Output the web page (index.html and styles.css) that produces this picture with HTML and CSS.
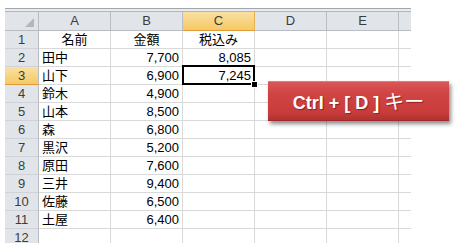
FILE: index.html
```html
<!DOCTYPE html>
<html lang="ja">
<head>
  <meta charset="UTF-8">
  <meta name="viewport" content="width=device-width, initial-scale=1.0">
  <title>Ctrl + D</title>
  <link rel="stylesheet" href="styles.css">
</head>
<body>
  <div class="page">
    <div class="sheet">
      <div class="sheet-top"></div>
      <div class="grid">
        <div class="hd corner"></div>
        <div class="hd col">A</div>
        <div class="hd col">B</div>
        <div class="hd col sel">C</div>
        <div class="hd col">D</div>
        <div class="hd col">E</div>
        <div class="hd col last"></div>

        <div class="rh">1</div>
        <div class="c ctr">名前</div>
        <div class="c ctr">金額</div>
        <div class="c ctr">税込み</div>
        <div class="c"></div><div class="c"></div><div class="c last"></div>

        <div class="rh">2</div>
        <div class="c">田中</div>
        <div class="c num">7,700</div>
        <div class="c num">8,085</div>
        <div class="c"></div><div class="c"></div><div class="c last"></div>

        <div class="rh sel">3</div>
        <div class="c">山下</div>
        <div class="c num">6,900</div>
        <div class="c num active">7,245</div>
        <div class="c"></div><div class="c"></div><div class="c last"></div>

        <div class="rh">4</div>
        <div class="c">鈴木</div>
        <div class="c num">4,900</div>
        <div class="c"></div><div class="c"></div><div class="c"></div><div class="c last"></div>

        <div class="rh">5</div>
        <div class="c">山本</div>
        <div class="c num">8,500</div>
        <div class="c"></div><div class="c"></div><div class="c"></div><div class="c last"></div>

        <div class="rh">6</div>
        <div class="c">森</div>
        <div class="c num">6,800</div>
        <div class="c"></div><div class="c"></div><div class="c"></div><div class="c last"></div>

        <div class="rh">7</div>
        <div class="c">黒沢</div>
        <div class="c num">5,200</div>
        <div class="c"></div><div class="c"></div><div class="c"></div><div class="c last"></div>

        <div class="rh">8</div>
        <div class="c">原田</div>
        <div class="c num">7,600</div>
        <div class="c"></div><div class="c"></div><div class="c"></div><div class="c last"></div>

        <div class="rh">9</div>
        <div class="c">三井</div>
        <div class="c num">9,400</div>
        <div class="c"></div><div class="c"></div><div class="c"></div><div class="c last"></div>

        <div class="rh">10</div>
        <div class="c">佐藤</div>
        <div class="c num">6,500</div>
        <div class="c"></div><div class="c"></div><div class="c"></div><div class="c last"></div>

        <div class="rh">11</div>
        <div class="c">土屋</div>
        <div class="c num">6,400</div>
        <div class="c"></div><div class="c"></div><div class="c"></div><div class="c last"></div>

        <div class="rh">12</div>
        <div class="c"></div><div class="c"></div><div class="c"></div>
        <div class="c"></div><div class="c"></div><div class="c last"></div>
      </div>
    </div>

    <div class="callout">Ctrl + [ D ] <span class="jp">キー</span></div>
  </div>
</body>
</html>
```

FILE: styles.css
```css
body {
  margin: 0;
  background: #fff;
  font-family: "Liberation Sans", "Noto Sans CJK JP", sans-serif;
}
.page {
  position: relative;
  width: 458px;
  height: 251px;
}
.sheet {
  margin: 8px 0 0 5px;
  width: 406px;
  height: 235px;
  overflow: hidden;
}
.sheet-top {
  height: 2px;
  border-top: 1px solid #a3a6aa;
  border-bottom: 1px solid #b2b6bc;
  background: #e9ebee;
}
.grid {
  display: grid;
  grid-template-columns: 34px repeat(5, 72px) 12px;
  grid-template-rows: 19px;
  grid-auto-rows: 18px;
}
.grid > div {
  box-sizing: border-box;
  border-right: 1px solid #d9d9d9;
  border-bottom: 1px solid #d9d9d9;
}

/* headers */
.hd {
  background: #e1e5ea;
  border-right-color: #b8bdc4 !important;
  border-bottom-color: #b8bdc4 !important;
  color: #3c3c3c;
  font-size: 13px;
  line-height: 18px;
  text-align: center;
}
.hd.sel {
  background: linear-gradient(#fae0a3, #f5c965);
  border-right-color: #e7b04f !important;
  border-bottom-color: #e19b36 !important;
}
.corner {
  position: relative;
}
.corner::after {
  content: "";
  position: absolute;
  right: 4px;
  bottom: 3px;
  width: 9px;
  height: 9px;
  background: #b3b7bd;
  clip-path: polygon(100% 0, 100% 100%, 0 100%);
}
.rh {
  background: #e1e5ea;
  border-right-color: #b8bdc4 !important;
  border-bottom-color: #cfd3d9 !important;
  color: #3c3c3c;
  font-size: 13px;
  line-height: 18px;
  text-align: center;
}
.rh.sel {
  background: linear-gradient(#fae0a3, #f5c965);
  border-bottom-color: #e19b36 !important;
}

/* cells */
.c {
  padding: 0 3px;
  font-size: 13px;
  line-height: 18px;
  color: #000;
  white-space: nowrap;
}
.c.ctr {
  text-align: center;
}
.c.num {
  text-align: right;
}
.grid > .last {
  border-right: none;
}
.c.active {
  position: relative;
}
.c.active::after {
  content: "";
  position: absolute;
  top: -2px;
  left: -1px;
  right: -1px;
  bottom: -1px;
  border: 2px solid #000;
}
.c.active::before {
  content: "";
  position: absolute;
  right: -4px;
  bottom: -4px;
  width: 5px;
  height: 5px;
  background: #000;
  border: 1px solid #fff;
  z-index: 1;
}

/* red key label */
.callout {
  position: absolute;
  left: 268px;
  top: 73px;
  width: 181px;
  height: 40px;
  box-sizing: border-box;
  border-top: 1px solid #e47a7a;
  border-bottom: 1px solid #9e2b2b;
  background: linear-gradient(#dc5656, #d04444 30%, #c83c3c 80%, #b13232);
  box-shadow: 2px 3px 4px rgba(0, 0, 0, 0.45);
  color: #fff;
  font-size: 18px;
  font-weight: bold;
  line-height: 38px;
  text-align: center;
  text-shadow: 1px 1px 1px rgba(90, 0, 0, 0.5);
  white-space: nowrap;
}
.callout .jp {
  font-family: "Noto Sans CJK JP", sans-serif;
  font-weight: normal;
  font-size: 20px;
}
```
